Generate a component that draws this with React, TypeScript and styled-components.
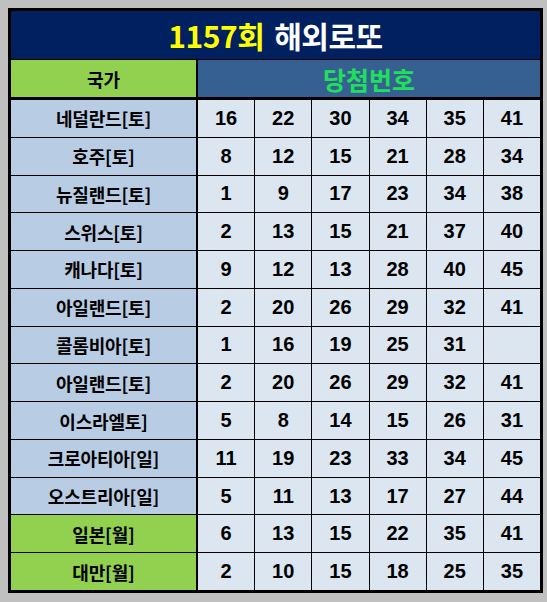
import { Fragment } from "react";
import styled, { createGlobalStyle } from "styled-components";

const GlobalStyle = createGlobalStyle`
  html, body {
    margin: 0;
    padding: 0;
    background: #c0c0c0;
  }
  body {
    font-family: "Noto Sans CJK KR", "Liberation Sans", sans-serif;
  }
`;

type Row = { country: string; nums: (number | null)[]; highlight?: boolean };

const rows: Row[] = [
  { country: "네덜란드[토]", nums: [16, 22, 30, 34, 35, 41] },
  { country: "호주[토]", nums: [8, 12, 15, 21, 28, 34] },
  { country: "뉴질랜드[토]", nums: [1, 9, 17, 23, 34, 38] },
  { country: "스위스[토]", nums: [2, 13, 15, 21, 37, 40] },
  { country: "캐나다[토]", nums: [9, 12, 13, 28, 40, 45] },
  { country: "아일랜드[토]", nums: [2, 20, 26, 29, 32, 41] },
  { country: "콜롬비아[토]", nums: [1, 16, 19, 25, 31, null] },
  { country: "아일랜드[토]", nums: [2, 20, 26, 29, 32, 41] },
  { country: "이스라엘토]", nums: [5, 8, 14, 15, 26, 31] },
  { country: "크로아티아[일]", nums: [11, 19, 23, 33, 34, 45] },
  { country: "오스트리아[일]", nums: [5, 11, 13, 17, 27, 44] },
  { country: "일본[월]", nums: [6, 13, 15, 22, 35, 41], highlight: true },
  { country: "대만[월]", nums: [2, 10, 15, 18, 25, 35], highlight: true },
];

const Page = styled.div`
  padding: 8px;
`;

const Table = styled.div`
  width: 535px;
  height: 585px;
  box-sizing: border-box;
  border: 3px solid #000;
  background: #000;
  display: flex;
  flex-direction: column;
`;

const Title = styled.div`
  height: 48px;
  flex: none;
  margin-bottom: 1px;
  background: #002060;
  display: flex;
  align-items: center;
  justify-content: center;
  gap: 10px;
  font-size: 30px;
  font-weight: 700;
  letter-spacing: -0.5px;
`;

const Round = styled.span`
  color: #ffff00;
`;

const Name = styled.span`
  color: #ffffff;
`;

const Grid = styled.div`
  flex: 1;
  display: grid;
  grid-template-columns: 186px repeat(6, 1fr);
  grid-template-rows: 39px repeat(13, 1fr);
  gap: 1px;
`;

const Cell = styled.div`
  display: flex;
  align-items: center;
  justify-content: center;
  font-weight: 700;
  color: #000;
`;

const HeadCountry = styled(Cell)`
  background: #92d050;
  margin: 0 1px 2px 0;
  font-size: 18px;
`;

const HeadNumbers = styled(Cell)`
  grid-column: span 6;
  background: #366092;
  margin-bottom: 2px;
  color: #1ee05a;
  font-size: 25px;
`;

const Country = styled(Cell)<{ $highlight?: boolean }>`
  background: ${(p) => (p.$highlight ? "#92d050" : "#b8cce4")};
  margin-right: 1px;
  font-size: 18px;
  letter-spacing: -0.2px;
`;

const Num = styled(Cell)`
  background: #dce6f1;
  font-family: "Liberation Sans", "Noto Sans CJK KR", sans-serif;
  font-size: 20px;
`;

export default function App() {
  return (
    <Page>
      <GlobalStyle />
      <Table>
        <Title>
          <Round>1157회</Round>
          <Name>해외로또</Name>
        </Title>
        <Grid>
          <HeadCountry>국가</HeadCountry>
          <HeadNumbers>당첨번호</HeadNumbers>
          {rows.map((r, i) => (
            <Fragment key={i}>
              <Country $highlight={r.highlight}>{r.country}</Country>
              {r.nums.map((n, j) => (
                <Num key={j}>{n ?? ""}</Num>
              ))}
            </Fragment>
          ))}
        </Grid>
      </Table>
    </Page>
  );
}
